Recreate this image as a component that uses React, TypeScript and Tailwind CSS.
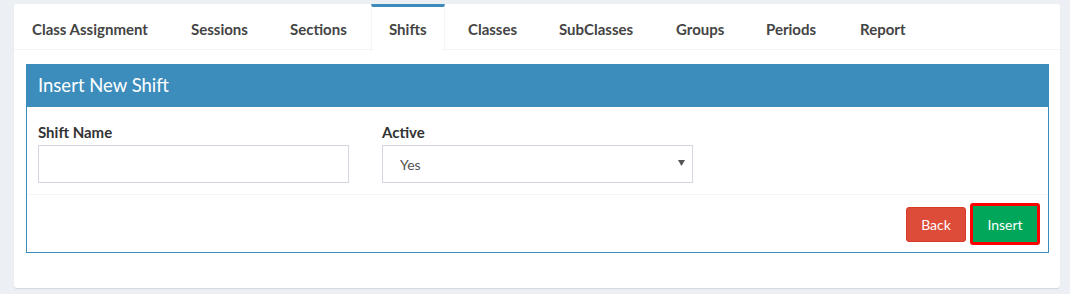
import React from 'react'

const tabs: { label: string; width: string; active?: boolean }[] = [
  { label: 'Class Assignment', width: 'w-[159px]' },
  { label: 'Sessions', width: 'w-[99px]' },
  { label: 'Sections', width: 'w-[99px]' },
  { label: 'Shifts', width: 'w-[79px]', active: true },
  { label: 'Classes', width: 'w-[91px]' },
  { label: 'SubClasses', width: 'w-[117px]' },
  { label: 'Groups', width: 'w-[90px]' },
  { label: 'Periods', width: 'w-[94px]' },
  { label: 'Report', width: 'w-[90px]' }
]

const font = { fontFamily: 'Lato, "Open Sans", sans-serif' }

export default function App() {
  return (
    <div className="min-h-[294px] bg-[#ecf0f5] pl-[14px] pr-[10px] pt-[4px]" style={font}>
      <div className="h-[284px] rounded-[3px] bg-white shadow-[0_1px_1px_rgba(0,0,0,0.1)]">
        {/* tab strip */}
        <div className="flex h-[46px] border-b border-[#f4f4f4]">
          {tabs.map((t) =>
            t.active ? (
              <div key={t.label} className={`${t.width} flex`}>
                <div className="-mb-px flex h-[47px] w-[74px] items-center border-x border-t-[3px] border-x-[#f4f4f4] border-t-[#3c8dbc] bg-white pl-[17px] pt-[1px] text-[15px] font-bold text-[#444]">
                  {t.label}
                </div>
              </div>
            ) : (
              <div
                key={t.label}
                className={`${t.width} flex items-center pl-[18px] pt-[5px] text-[15px] font-bold text-[#444]`}
              >
                {t.label}
              </div>
            )
          )}
        </div>

        {/* panel */}
        <div className="ml-[12px] mr-[11px] mt-[14px] border border-[#3c8dbc]">
          <div className="flex h-[42px] items-center bg-[#3c8dbc] pl-[11px] text-[18.5px] text-white">
            Insert New Shift
          </div>

          <div className="flex gap-[33px] px-[11px] pb-[11px] pt-[13px]">
            <div className="w-[311px]">
              <label className="block h-[20px] pt-[2px] text-[15px] font-bold leading-[20px] text-[#333]">
                Shift Name
              </label>
              <input
                type="text"
                className="mt-[5px] h-[38px] w-full border border-[#d2d6de] px-3 text-[14px] text-[#555] outline-none"
              />
            </div>
            <div className="w-[311px]">
              <label className="block h-[20px] pt-[2px] text-[15px] font-bold leading-[20px] text-[#333]">
                Active
              </label>
              <div className="relative mt-[5px]">
                <select
                  defaultValue="Yes"
                  className="h-[38px] w-full appearance-none border border-[#d2d6de] bg-white pl-[17px] text-[14px] text-[#555] outline-none"
                  style={font}
                >
                  <option>Yes</option>
                  <option>No</option>
                </select>
                <svg
                  className="pointer-events-none absolute right-[8px] top-[15px]"
                  width="7"
                  height="6"
                  viewBox="0 0 7 6"
                >
                  <path d="M0 0 L7 0 L3.5 6 Z" fill="#555" />
                </svg>
              </div>
            </div>
          </div>

          <div className="flex items-center justify-end gap-[4px] border-t border-[#f4f4f4] pb-[7px] pr-[8px] pt-[8px]">
            <button className="h-[35px] w-[60px] rounded-[3px] border border-[#d73925] bg-[#dd4b39] text-[14px] text-white">
              Back
            </button>
            <button className="h-[42px] w-[70px] rounded-[3px] border-[3px] border-[#ff0000] bg-[#00a65a] text-[14px] text-white">
              Insert
            </button>
          </div>
        </div>
      </div>
    </div>
  )
}
